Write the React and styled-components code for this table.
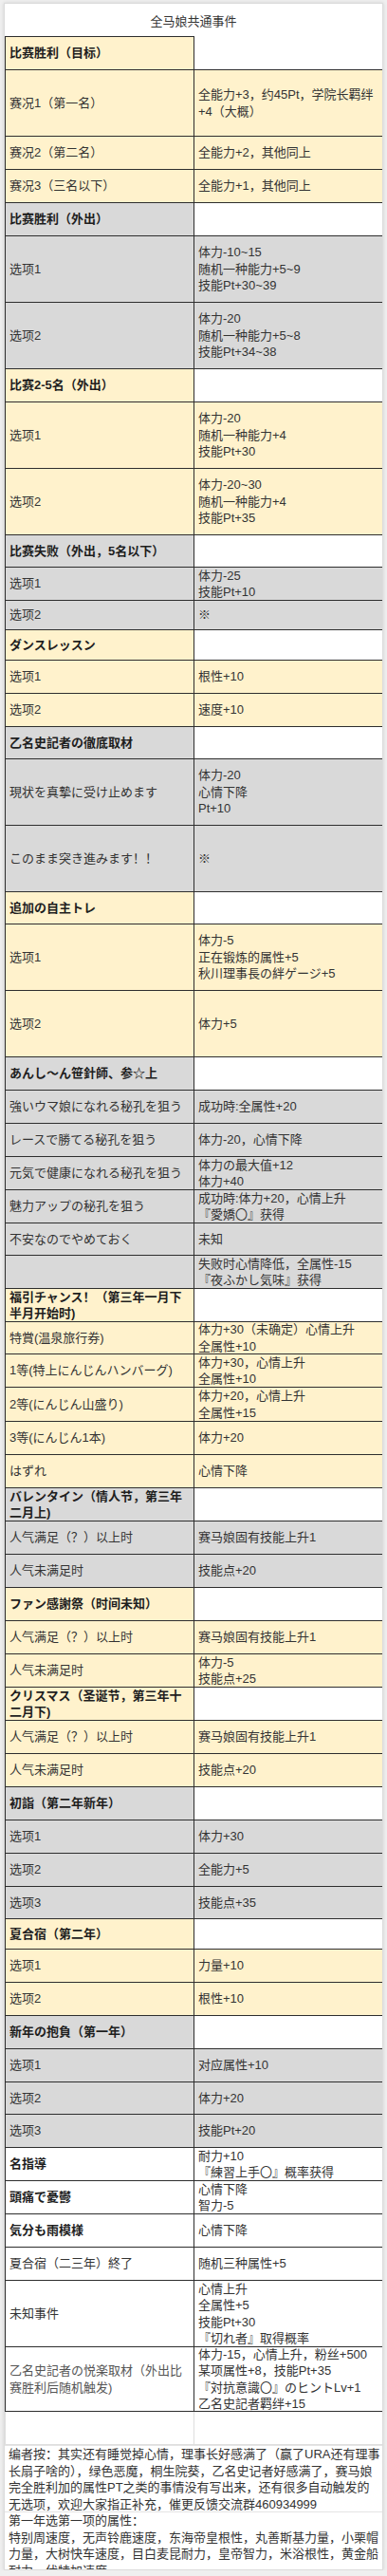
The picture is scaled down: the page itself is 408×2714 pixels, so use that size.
import React from "react";
import styled, { createGlobalStyle } from "styled-components";

const GlobalStyle = createGlobalStyle`
  html, body {
    margin: 0;
    padding: 0;
    background: #efefef;
  }
  body {
    font-family: "Liberation Sans", "Noto Sans CJK SC", sans-serif;
    color: #333;
  }
`;

const TONES = {
  gold: "#fff2cc",
  gray: "#d9d9d9",
  white: "#ffffff",
};

// 每个分组：标题 + 选项行（h 为行高，默认 35）
const sections = [
  {
    tone: "gold",
    title: "比赛胜利（目标）",
    rows: [
      { label: "赛况1（第一名）", lines: ["全能力+3，约45Pt，学院长羁绊+4（大概）"], h: 70 },
      { label: "赛况2（第二名）", lines: ["全能力+2，其他同上"] },
      { label: "赛况3（三名以下）", lines: ["全能力+1，其他同上"] },
    ],
  },
  {
    tone: "gray",
    title: "比赛胜利（外出）",
    rows: [
      { label: "选项1", lines: ["体力-10~15", "随机一种能力+5~9", "技能Pt+30~39"], h: 70 },
      { label: "选项2", lines: ["体力-20", "随机一种能力+5~8", "技能Pt+34~38"], h: 70 },
    ],
  },
  {
    tone: "gold",
    title: "比赛2-5名（外出）",
    rows: [
      { label: "选项1", lines: ["体力-20", "随机一种能力+4", "技能Pt+30"], h: 70 },
      { label: "选项2", lines: ["体力-20~30", "随机一种能力+4", "技能Pt+35"], h: 70 },
    ],
  },
  {
    tone: "gray",
    title: "比赛失败（外出，5名以下）",
    headH: 34,
    rows: [
      { label: "选项1", lines: ["体力-25", "技能Pt+10"] },
      { label: "选项2", lines: ["※"], h: 31 },
    ],
  },
  {
    tone: "gold",
    title: "ダンスレッスン",
    headH: 32,
    rows: [
      { label: "选项1", lines: ["根性+10"] },
      { label: "选项2", lines: ["速度+10"] },
    ],
  },
  {
    tone: "gray",
    title: "乙名史記者の徹底取材",
    headH: 34,
    rows: [
      { label: "現状を真摯に受け止めます", lines: ["体力-20", "心情下降", "Pt+10"], h: 70 },
      { label: "このまま突き進みます！！", lines: ["※"], h: 70 },
    ],
  },
  {
    tone: "gold",
    title: "追加の自主トレ",
    headH: 34,
    rows: [
      { label: "选项1", lines: ["体力-5", "正在锻炼的属性+5", "秋川理事長の絆ゲージ+5"], h: 70 },
      { label: "选项2", lines: ["体力+5"], h: 70 },
    ],
  },
  {
    tone: "gray",
    title: "あんし～ん笹針師、参☆上",
    rows: [
      { label: "強いウマ娘になれる秘孔を狙う", lines: ["成功時:全属性+20"] },
      { label: "レースで勝てる秘孔を狙う", lines: ["体力-20，心情下降"] },
      { label: "元気で健康になれる秘孔を狙う", lines: ["体力の最大值+12", "体力+40"] },
      { label: "魅力アップの秘孔を狙う", lines: ["成功時:体力+20，心情上升", "『愛嬌〇』获得"] },
      { label: "不安なのでやめておく", lines: ["未知"], h: 34 },
      { label: "", lines: ["失败时心情降低，全属性-15", "『夜ふかし気味』获得"] },
    ],
  },
  {
    tone: "gold",
    title: "福引チャンス！（第三年一月下半月开始时)",
    rows: [
      { label: "特賞(温泉旅行券)", lines: ["体力+30（未确定）心情上升", "全属性+10"], h: 34 },
      { label: "1等(特上にんじんハンバーグ)", lines: ["体力+30，心情上升", "全属性+10"] },
      { label: "2等(にんじん山盛り)", lines: ["体力+20，心情上升", "全属性+15"], h: 36 },
      { label: "3等(にんじん1本)", lines: ["体力+20"] },
      { label: "はずれ", lines: ["心情下降"] },
    ],
  },
  {
    tone: "gray",
    title: "バレンタイン（情人节，第三年二月上)",
    rows: [
      { label: "人气满足（？）以上时", lines: ["赛马娘固有技能上升1"] },
      { label: "人气未满足时", lines: ["技能点+20"] },
    ],
  },
  {
    tone: "gold",
    title: "ファン感謝祭（时间未知）",
    rows: [
      { label: "人气满足（？）以上时", lines: ["赛马娘固有技能上升1"] },
      { label: "人气未满足时", lines: ["体力-5", "技能点+25"] },
    ],
  },
  {
    tone: "gold",
    title: "クリスマス（圣诞节，第三年十二月下)",
    rows: [
      { label: "人气满足（？）以上时", lines: ["赛马娘固有技能上升1"] },
      { label: "人气未满足时", lines: ["技能点+20"] },
    ],
  },
  {
    tone: "gray",
    title: "初詣（第二年新年）",
    rows: [
      { label: "选项1", lines: ["体力+30"] },
      { label: "选项2", lines: ["全能力+5"] },
      { label: "选项3", lines: ["技能点+35"], h: 34 },
    ],
  },
  {
    tone: "gold",
    title: "夏合宿（第二年）",
    headH: 32,
    rows: [
      { label: "选项1", lines: ["力量+10"] },
      { label: "选项2", lines: ["根性+10"] },
    ],
  },
  {
    tone: "gray",
    title: "新年の抱負（第一年）",
    rows: [
      { label: "选项1", lines: ["对应属性+10"] },
      { label: "选项2", lines: ["体力+20"], h: 34 },
      { label: "选项3", lines: ["技能Pt+20"] },
    ],
  },
];

const misc = [
  { label: "名指導", bold: true, lines: ["耐力+10", "『練習上手〇』概率获得"] },
  { label: "頭痛で憂鬱", bold: true, lines: ["心情下降", "智力-5"] },
  { label: "気分も雨模様", bold: true, lines: ["心情下降"] },
  { label: "夏合宿（二三年）終了", lines: ["随机三种属性+5"] },
  { label: "未知事件", lines: ["心情上升", "全属性+5", "技能Pt+30", "『切れ者』取得概率"], h: 70 },
  {
    label: "乙名史記者の悦楽取材（外出比赛胜利后随机触发)",
    muted: true,
    lines: ["体力-15，心情上升，粉丝+500", "某项属性+8，技能Pt+35", "『対抗意識〇』のヒントLv+1", "乙名史記者羁绊+15"],
    h: 68,
  },
];

const Card = styled.div`
  margin: 3px 0 0 4px;
  width: 398px;
  height: 2703px;
  border: 1px solid #dcdcdc;
  background: #fff;
  overflow: hidden;
  box-shadow: 0 0 4px rgba(0, 0, 0, 0.12);
`;

const Title = styled.div`
  height: 34px;
  display: flex;
  align-items: center;
  justify-content: center;
  font-size: 13px;
  color: #333;
`;

const Table = styled.table`
  width: 398px;
  border-collapse: collapse;
  table-layout: fixed;
`;

const Col = styled.col`
  width: 199px;
`;

const Cell = styled.td`
  padding: 0 4px 0 4px;
  vertical-align: middle;
  font-size: 13px;
  line-height: 17.4px;
  font-weight: ${(p) => (p.$bold ? 700 : 400)};
  color: ${(p) => (p.$bold ? "#1e1e1e" : p.$muted ? "#555" : "#333")};
  background: ${(p) => (p.$blank ? "transparent" : TONES[p.$tone])};
  border: ${(p) =>
    p.$blank ? "none" : `1px solid ${p.$light ? "#dedede" : "#2e2e2e"}`};
`;

const Box = styled.div`
  height: ${(p) => p.$h - 1}px;
  display: flex;
  flex-direction: column;
  justify-content: center;
`;

const Line = styled.div``;

const Notes = styled.div`
  font-size: 13px;
  line-height: 17.6px;
  color: #333;
`;

const NoteBlock = styled.div`
  height: ${(p) => (p.$h ? `${p.$h}px` : "auto")};
  padding: 0 2px 0 4px;
  border-top: 1px solid #e4e4e4;
  box-sizing: border-box;
`;

const Row = ({ tone, label, lines, h = 35, bold, muted }) => (
  <tr>
    <Cell $tone={tone} $bold={bold} $muted={muted}>
      <Box $h={h}>{label}</Box>
    </Cell>
    <Cell $tone={tone}>
      <Box $h={h}>
        {lines.map((l, i) => (
          <Line key={i}>{l}</Line>
        ))}
      </Box>
    </Cell>
  </tr>
);

const Section = ({ tone, title, headH = 35, rows }) => (
  <>
    <tr>
      <Cell $tone={tone} $bold>
        <Box $h={headH}>{title}</Box>
      </Cell>
      <Cell $blank>
        <Box $h={headH} />
      </Cell>
    </tr>
    {rows.map((r, i) => (
      <Row key={i} tone={tone} {...r} />
    ))}
  </>
);

export default function App() {
  return (
    <>
      <GlobalStyle />
      <Card>
        <Title>全马娘共通事件</Title>
        <Table>
          <colgroup>
            <Col />
            <Col />
          </colgroup>
          <tbody>
            {sections.map((s, i) => (
              <Section key={i} {...s} />
            ))}
            {misc.map((r, i) => (
              <Row key={i} tone="white" {...r} />
            ))}
            <tr>
              <Cell $tone="white" $light>
                <Box $h={35} />
              </Cell>
              <Cell $tone="white" $light>
                <Box $h={35} />
              </Cell>
            </tr>
          </tbody>
        </Table>
        <Notes>
          <NoteBlock $h={70}>
            编者按：其实还有睡觉掉心情，理事长好感满了（赢了URA还有理事长扇子啥的），绿色恶魔，桐生院葵，乙名史记者好感满了，赛马娘完全胜利加的属性PT之类的事情没有写出来，还有很多自动触发的无选项，欢迎大家指正补充，催更反馈交流群460934999
          </NoteBlock>
          <NoteBlock>
            <Line>第一年选第一项的属性：</Line>
            <Line>
              特别周速度，无声铃鹿速度，东海帝皇根性，丸善斯基力量，小栗帽力量，大树快车速度，目白麦昆耐力，皇帝智力，米浴根性，黄金船耐力，伏特加速度
            </Line>
          </NoteBlock>
        </Notes>
      </Card>
    </>
  );
}
